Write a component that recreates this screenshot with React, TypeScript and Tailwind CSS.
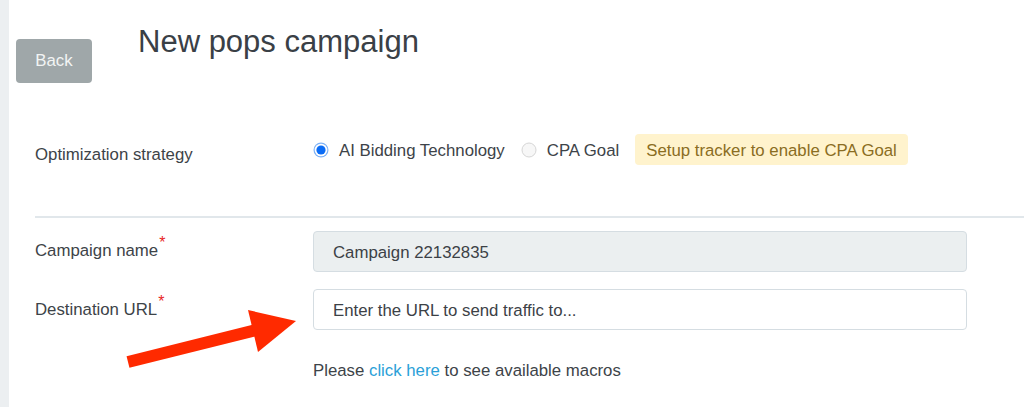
import React from "react";

const font = { fontFamily: '"Liberation Sans", Arial, Helvetica, sans-serif' };

function Radio({ checked }: { checked: boolean }) {
  return checked ? (
    <svg width="16" height="16" viewBox="0 0 16 16" className="shrink-0">
      <circle cx="8" cy="8" r="7.5" fill="#7fb2f5" />
      <circle cx="8" cy="8" r="6.3" fill="#ffffff" />
      <circle cx="8" cy="8" r="4.6" fill="#0b6cf5" />
    </svg>
  ) : (
    <svg width="16" height="16" viewBox="0 0 16 16" className="shrink-0">
      <circle cx="8" cy="8" r="7" fill="#f7f7f7" stroke="#d6d6d6" strokeWidth="1" />
    </svg>
  );
}

export default function App() {
  return (
    <div
      className="relative flex h-[407px] w-full overflow-hidden bg-white text-[#3d4348]"
      style={font}
    >
      <div className="w-[9px] shrink-0 bg-[#eceff1]" />
      <div className="flex-1">
        <div className="flex items-start pl-[7px]">
          <button className="mt-[39px] flex h-[44px] w-[76px] items-center justify-center rounded-[4px] bg-[#9fa7a9] text-[16.8px] text-[#f2f4f4]">
            Back
          </button>
          <h1 className="ml-[46px] mt-[24px] text-[31px] leading-[36px] font-normal text-[#3a4046]">
            New pops campaign
          </h1>
        </div>

        <div className="mt-[51px] flex pl-[26px] text-[16.8px] leading-[20px]">
          <div className="w-[278px] pt-[11px]">Optimization strategy</div>
          <div className="flex h-[31px] items-center">
            <Radio checked />
            <span className="ml-[10px] pt-[2px]">AI Bidding Technology</span>
            <span className="ml-[16px]">
              <Radio checked={false} />
            </span>
            <span className="ml-[10px] pt-[2px]">CPA Goal</span>
            <span className="ml-[16px] flex h-[31px] items-center rounded-[4px] bg-[#fff3cd] px-[11px] pt-[2px] text-[#8a6d22]">
              Setup tracker to enable CPA Goal
            </span>
          </div>
        </div>

        <div className="ml-[26px] mt-[51px] h-[2px] bg-[#e1e7eb]" />

        <div className="mt-[13px] flex pl-[26px] text-[16.8px] leading-[20px]">
          <div className="w-[278px] pt-[10px]">
            Campaign name<sup className="ml-[1px] text-[16px] text-[#e8271f]">*</sup>
          </div>
          <div className="flex h-[41px] w-[654px] items-center rounded-[4px] border border-[#d5dde2] bg-[#ebeff0] px-[19px] pt-[2px] text-[#3c4146]">
            Campaign 22132835
          </div>
        </div>

        <div className="mt-[17px] flex pl-[26px] text-[16.8px] leading-[20px]">
          <div className="w-[278px] pt-[11px]">
            Destination URL<sup className="ml-[1px] text-[16px] text-[#e8271f]">*</sup>
          </div>
          <div className="flex h-[41px] w-[654px] items-center rounded-[4px] border border-[#d5dde2] bg-white px-[19px] pt-[2px] text-[#3c4146]">
            Enter the URL to send traffic to...
          </div>
        </div>

        <div className="mt-[31px] pl-[304px] text-[16.8px] leading-[20px]">
          Please <span className="text-[#2b9fd8]">click here</span> to see available macros
        </div>
      </div>

      <svg
        className="pointer-events-none absolute left-0 top-0"
        width="1024"
        height="407"
        viewBox="0 0 1024 407"
      >
        <line x1="128" y1="362" x2="256" y2="330" stroke="#ff2a00" strokeWidth="12" />
        <polygon points="248,310 296,321 258,352" fill="#ff2a00" />
      </svg>
    </div>
  );
}
